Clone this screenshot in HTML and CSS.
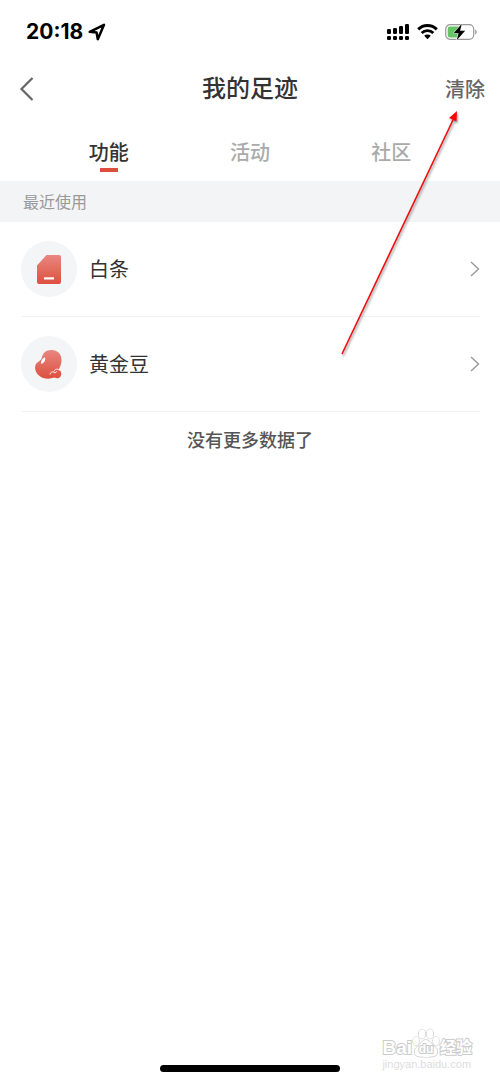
FILE: index.html
```
<!DOCTYPE html>
<html lang="zh-CN">
<head>
<meta charset="utf-8">
<meta name="viewport" content="width=device-width, initial-scale=1">
<title>我的足迹</title>
<link rel="stylesheet" href="styles.css">
</head>
<body>
<div class="screen">
  <div class="status">
    <div class="status-left">
      <span class="time">20:18</span>
      <svg class="locate" width="18" height="18" viewBox="0 0 18 18" aria-hidden="true"><path d="M1.7 8.8 16 1.8 9.8 16.2 8.6 9.6Z" fill="none" stroke="#000" stroke-width="2.5" stroke-linejoin="round"/></svg>
    </div>
    <div class="status-right">
      <svg width="23" height="17" viewBox="0 0 23 17" aria-hidden="true">
        <rect x="0" y="5" width="4" height="5" rx="1.3"/><rect x="6" y="4" width="4" height="6" rx="1.3"/><rect x="12" y="2" width="4" height="8" rx="1.3"/><rect x="18" y="0" width="4" height="10" rx="1.3"/>
        <rect x="0" y="12" width="4" height="4" rx="1.3"/><rect x="6" y="12" width="4" height="4" rx="1.3"/><rect x="12" y="12" width="4" height="4" rx="1.3"/><rect x="18" y="12" width="4" height="4" rx="1.3"/>
      </svg>
      <svg width="21" height="16" viewBox="0 0 21 16" aria-hidden="true"><g fill="none" stroke="#000" stroke-width="2.9"><path d="M1.200 5.400a13.200 13.200 0 0 1 18.600 0"/><path d="M4.700 9a8.200 8.200 0 0 1 11.600 0"/></g><path d="M7.200 11.800a4.700 4.700 0 0 1 6.600 0L10.500 15.200Z"/></svg>
      <svg width="32" height="18" viewBox="0 0 32 18" aria-hidden="true"><rect x=".7" y="1.7" width="28" height="14.6" rx="4.5" fill="#fff" stroke="#999" stroke-width="1.2"/><path d="M5 3.500h8.500v11H5a2.300 2.300 0 0 1-2.300-2.300V5.800A2.300 2.300 0 0 1 5 3.500Z" fill="#65c466"/><path d="M30.200 6.500c2 .8 2 4.200 0 5Z" fill="#999"/><path d="M16.800.8 8.600 10.300h5L11.700 17.200 20.200 7.800h-5.100Z" stroke="#fff" stroke-width="1" paint-order="stroke"/></svg>
    </div>
  </div>
  <header class="nav">
    <button class="back" aria-label="返回"><svg width="16" height="26" viewBox="0 0 16 26" aria-hidden="true"><path d="M13.500 2 2.500 13l11 11" fill="none" stroke="#666" stroke-width="2.200"/></svg></button>
    <h1 class="title">我的足迹</h1>
    <button class="clear">清除</button>
  </header>
  <nav class="tabs" role="tablist">
    <button class="tab tab-active" role="tab" aria-selected="true">功能</button>
    <button class="tab" role="tab" aria-selected="false">活动</button>
    <button class="tab" role="tab" aria-selected="false">社区</button>
  </nav>
  <main class="content">
    <h2 class="section">最近使用</h2>
    <ul class="list">
      <li><a class="row" href="#baitiao">
        <span class="badge"><svg width="56" height="56" viewBox="0 0 56 56" aria-hidden="true"><defs><linearGradient id="red" x1="0" y1="0" x2="0" y2="1"><stop offset="0" stop-color="#e88780"/><stop offset="1" stop-color="#dc5040"/></linearGradient></defs><path d="M25.500 14H38a2 2 0 0 1 2 2v25a2 2 0 0 1-2 2H18a2 2 0 0 1-2-2V24.500Z" fill="url(#red)"/><path d="M23 37.400h10" stroke="#fff" stroke-width="2.200"/></svg></span>
        <span class="name">白条</span>
        <svg width="10" height="16" viewBox="0 0 10 16" aria-hidden="true"><path d="m1 1 7.500 7-7.500 7" fill="none" stroke="#999" stroke-width="1.400"/></svg>
      </a></li>
      <li><a class="row" href="#beans">
        <span class="badge"><svg width="56" height="56" viewBox="0 0 56 56" aria-hidden="true"><path d="M29.500 14C35.500 13.300 41 17.500 40.500 24.500C40.300 28 39.300 31 37.500 33.500C40 34.500 41 37.500 39.800 40C38.500 42.700 35.500 42.800 33.500 41.500C28 43.500 22 43 18 39.500C13.500 35.500 12.500 29 17 26C21 23.500 20.500 22.500 21.500 19.500C22.800 16.200 25.500 14.300 29.500 14Z" fill="url(#red)"/><path d="M20.200 28C19.500 24.800 21.500 22.300 24.200 21.200C24.700 24.300 23.200 26.900 20.200 28Z" fill="#fff"/><path d="M29 38.500C29.500 35.500 32 35.300 34 37M33 35.500C34 32.800 36.800 32.300 38.500 34.500M34 37 35.800 35.500" fill="none" stroke="#fff" stroke-width=".9"/></svg></span>
        <span class="name">黄金豆</span>
        <svg width="10" height="16" viewBox="0 0 10 16" aria-hidden="true"><path d="m1 1 7.500 7-7.500 7" fill="none" stroke="#999" stroke-width="1.400"/></svg>
      </a></li>
    </ul>
    <p class="end">没有更多数据了</p>
  </main>
  <div class="home"></div>
  <svg class="pointer" width="130" height="256" viewBox="0 0 130 256" aria-hidden="true"><path d="M6 243 117 9" fill="none" stroke="#f00e0e" stroke-width="1.600"/><path d="M121 0 113 7 120.500 10.500Z" fill="#f00"/></svg>
  <div class="watermark">
    <div class="mark-top"><span>Bai</span><span class="paw"><svg width="28" height="30" viewBox="0 0 28 30" aria-hidden="true"><g fill="#fff" stroke="#ccc" stroke-width="1.300"><ellipse cx="4" cy="13" rx="3" ry="4.200"/><ellipse cx="10" cy="6" rx="3.300" ry="4.700"/><ellipse cx="18" cy="6" rx="3.300" ry="4.700"/><ellipse cx="24" cy="13" rx="3" ry="4.200"/><path d="M14 12C18 12 20 17 23 19C27 22 26 28 21 28.500C17 29 11 29 7 28.500C2 28 1 22 5 19C8 17 10 12 14 12Z"/></g></svg><span class="du">du</span></span><span class="mark-cn">经验</span></div>
    <div class="mark-url">jingyan.baidu.com</div>
  </div>
</div>
</body>
</html>
```
FILE: styles.css
```
* { box-sizing: border-box; }
body {
  margin: 0;
  background: #fff;
  color: #333;
  font-family: "Liberation Sans", "Noto Sans CJK SC", sans-serif;
}
button {
  padding: 0;
  border: 0;
  background: none;
  color: inherit;
  font: inherit;
}
svg { display: block; flex: none; }
.screen {
  position: relative;
  display: flex;
  flex-direction: column;
  min-height: 100vh;
}
.status {
  display: flex;
  align-items: center;
  justify-content: space-between;
  height: 64px;
  padding: 0 23px 0 26px;
}
.status-left { display: flex; align-items: center; gap: 5px; }
.status-right { display: flex; align-items: center; gap: 7px; }
.time { color: #000; font: 700 21px/24px Inter, sans-serif; }
.nav {
  display: grid;
  grid-template-columns: 1fr auto 1fr;
  align-items: center;
  height: 50px;
  padding: 0 15px;
}
.back { justify-self: start; padding-left: 4px; }
.title { margin: 0; font-size: 24px; line-height: 32px; font-weight: 500; }
.clear { justify-self: end; padding-top: 2px; color: #666; font-size: 20px; font-weight: 500; line-height: 28px; }
.tabs { display: flex; height: 67px; padding: 25px 38px 9px; }
.tab {
  display: flex;
  flex: 1;
  flex-direction: column;
  align-items: center;
  justify-content: space-between;
  color: #aaa;
  font-size: 20px;
  font-weight: 500;
  line-height: 28px;
}
.tab-active { color: #333; }
.tab-active::after { content: ""; width: 18px; height: 4px; background: #de4c3c; }
.content { flex: 1; }
.section {
  margin: 0;
  padding: 9px 23px 7px;
  background: #f3f4f6;
  color: #999;
  font-size: 16px;
  font-weight: 400;
  line-height: 25px;
}
.list { margin: 0; padding: 0 20px 0 21px; list-style: none; }
.row {
  display: flex;
  align-items: center;
  gap: 12px;
  height: 95px;
  border-bottom: 1px solid #f3f3f3;
  color: #333;
  text-decoration: none;
}
.badge { border-radius: 50%; background: #f3f5f7; }
.name { flex: 1; padding-top: 2px; font-size: 20px; line-height: 28px; }
.end { margin: 0; padding: 16px 0; color: #555; font-size: 18px; font-weight: 500; line-height: 26px; text-align: center; }
.home { width: 36%; height: 7px; margin: 0 auto 10px; border-radius: 4px; background: #000; }
.pointer { position: absolute; top: 111px; right: 34px; filter: drop-shadow(1px 2px 1px #0006); pointer-events: none; }
.watermark { position: absolute; right: 28px; bottom: 11px; color: #fff; -webkit-text-stroke: 2px #ccc; paint-order: stroke; }
.mark-top { display: flex; align-items: flex-end; justify-content: flex-end; font-size: 19px; font-weight: 700; line-height: 20px; }
.paw { position: relative; }
.du { position: absolute; inset: 14px 0 0; font-size: 12px; line-height: 14px; text-align: center; }
.mark-cn { font-size: 16px; }
.mark-url { color: #ddd; font-size: 11px; line-height: 13px; -webkit-text-stroke: 0; }
```
